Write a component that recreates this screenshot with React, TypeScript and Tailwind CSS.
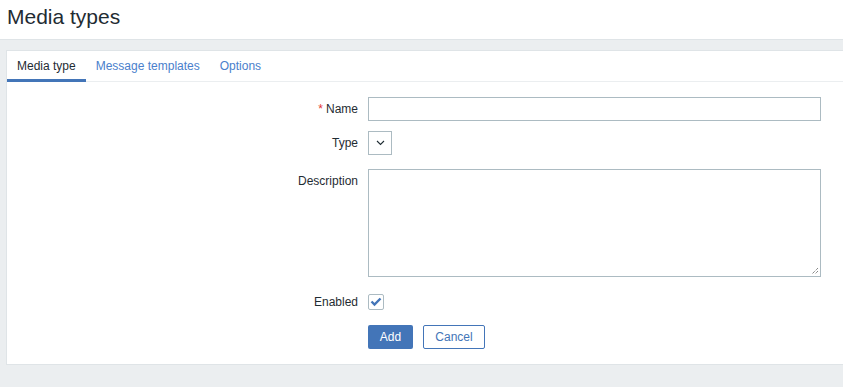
import React from "react";

export default function App() {
  const font = { fontFamily: '"Liberation Sans", Arial, sans-serif' };
  return (
    <div className="w-[843px] h-[387px] bg-[#ebeef0] overflow-hidden text-[#1f2c33]" style={font}>
      <header className="h-[40px] bg-white border-b border-[#dfe4e7] flex items-center pl-[7px]">
        <h1 className="text-[21px] leading-none text-[#1f2c33] -mt-[6px]">Media types</h1>
      </header>
      <div className="pt-[10px] pl-[6px]">
        <div className="bg-white border border-r-0 border-[#dfe4e7] h-[315px]">
          <div className="flex h-[31px] border-b border-[#ebeef0] text-[12px]">
            <div className="relative px-[10px] flex items-center text-[#1f2c33]">
              Media type
              <div className="absolute left-0 right-0 -bottom-px h-[3px] bg-[#4375b8]" />
            </div>
            <div className="px-[10px] flex items-center text-[#4a80cc]">Message templates</div>
            <div className="px-[10px] flex items-center text-[#4a80cc]">Options</div>
          </div>
          <div className="pt-[15px] text-[12px]">
            <div className="flex items-center h-[24px]">
              <div className="w-[361px] text-right pr-[10px]">
                <span className="text-[#e33734] mr-[3px]">*</span>Name
              </div>
              <div className="w-[453px] h-[24px] border border-[#acbbc2]" />
            </div>
            <div className="flex items-center h-[24px] mt-[10px]">
              <div className="w-[361px] text-right pr-[10px]">Type</div>
              <div className="w-[24px] h-[24px] border border-[#acbbc2] flex items-center justify-center">
                <svg width="9" height="6" viewBox="0 0 9 6">
                  <path d="M1 1 L4.5 4.5 L8 1" fill="none" stroke="#1f2c33" strokeWidth="1.1" />
                </svg>
              </div>
            </div>
            <div className="flex items-start mt-[14px]">
              <div className="w-[361px] text-right pr-[10px] pt-[3px]">Description</div>
              <div className="relative w-[453px] h-[108px] border border-[#acbbc2]">
                <svg className="absolute right-[1px] bottom-[1px]" width="8" height="8" viewBox="0 0 8 8">
                  <path d="M7 1 L1 7 M7 4 L4 7" stroke="#555" strokeWidth="1" strokeDasharray="1 1" />
                </svg>
              </div>
            </div>
            <div className="flex items-center h-[16px] mt-[17px]">
              <div className="w-[361px] text-right pr-[10px]">Enabled</div>
              <div className="w-[16px] h-[16px] border border-[#acbbc2] rounded-[2px] flex items-center justify-center">
                <svg width="12" height="10" viewBox="0 0 12 10">
                  <path d="M1.5 4.5 L4.5 7.5 L10.5 1.5" fill="none" stroke="#4375b8" strokeWidth="2.4" />
                </svg>
              </div>
            </div>
            <div className="flex items-center mt-[15px] pl-[361px] gap-[10px]">
              <div className="w-[45px] h-[24px] bg-[#4375b8] rounded-[2px] text-white flex items-center justify-center">Add</div>
              <div className="w-[62px] h-[24px] border border-[#4375b8] rounded-[2px] text-[#4375b8] flex items-center justify-center">Cancel</div>
            </div>
          </div>
        </div>
      </div>
    </div>
  );
}
